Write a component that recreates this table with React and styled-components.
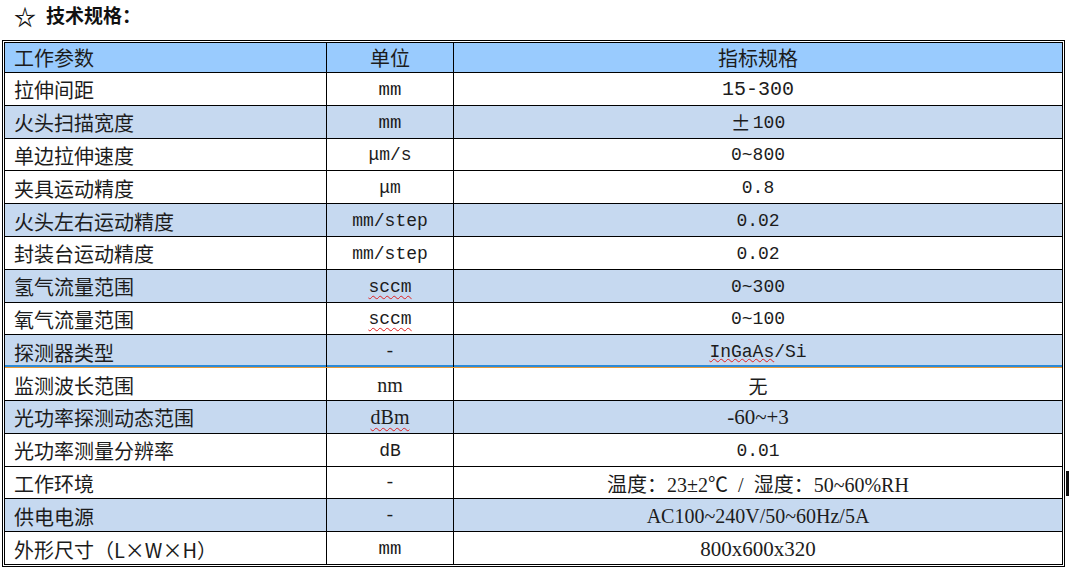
import React from 'react'
import styled, { createGlobalStyle, css } from 'styled-components'

const GlobalStyle = createGlobalStyle`
  html, body {
    margin: 0;
    padding: 0;
    background: #fff;
  }
  body {
    font-family: "Noto Sans CJK SC", sans-serif;
    color: #1c1c1c;
  }
`

const fonts = {
  cjk: '"Noto Sans CJK SC", sans-serif',
  serif: '"Liberation Serif", "Noto Sans CJK SC", serif',
  mono: '"Liberation Mono", "Noto Sans CJK SC", monospace',
}

const Page = styled.div`
  position: relative;
  width: 1071px;
  height: 568px;
  padding-left: 2px;
  box-sizing: border-box;
  overflow: hidden;
`

const Title = styled.h3`
  margin: 0 0 11px 0;
  height: 29px;
  padding-left: 12px;
  display: flex;
  align-items: center;
  gap: 10px;
  font-family: ${fonts.cjk};
  font-size: 19px;
  font-weight: 700;
  color: #111;
`

const Star = styled.span`
  font-family: "Noto Sans CJK SC", sans-serif;
  font-size: 22px;
  font-weight: 700;
`

const Table = styled.div`
  width: 1063px;
  height: 527px;
  box-sizing: border-box;
  border: 3px double #000;
  display: flex;
  flex-direction: column;
`

const Row = styled.div`
  display: grid;
  grid-template-columns: 322px 127px 1fr;
  flex: ${p => (p.$head ? '0 0 30px' : '1 1 0')};
  min-height: 0;
  box-sizing: border-box;
  background: ${p => p.$bg};
  border-bottom: 1px solid #000;
  &:last-child {
    border-bottom: none;
  }
  ${p =>
    p.$accent &&
    css`
      border-bottom: 1px solid #ec9a35;
      box-shadow: inset 0 -2px 0 #2d8ad6;
    `}
`

const Cell = styled.div`
  display: flex;
  align-items: center;
  justify-content: ${p => (p.$left ? 'flex-start' : 'center')};
  padding-left: ${p => (p.$left ? '9px' : '0')};
  padding-top: ${p => (p.$head ? '0' : '2px')};
  box-sizing: border-box;
  border-right: ${p => (p.$last ? 'none' : '1px solid #000')};
  font-family: ${p => fonts[p.$font || 'cjk']};
  font-size: ${p => p.$size || 20}px;
  white-space: pre;
  overflow: hidden;
`

const Wavy = styled.span`
  text-decoration: underline wavy #e02020;
  text-decoration-thickness: 1px;
  text-underline-offset: ${p => (p.$tight ? '1px' : '3px')};
`

const Wide = styled.span`
  font-family: ${fonts.cjk};
  font-size: 20px;
  margin-right: 2px;
`

const SideMark = styled.div`
  position: absolute;
  left: 1066px;
  top: 471px;
  width: 3px;
  height: 25px;
  background: #111;
`

const HEAD = '#99cbfe'
const BLUE = '#c6d9f0'
const WHITE = '#ffffff'

const rows = [
  { name: '拉伸间距', unit: ['mm', 'mono', 19], spec: ['15-300', 'mono', 20], bg: WHITE },
  { name: '火头扫描宽度', unit: ['mm', 'mono', 19], spec: ['100', 'mono', 18, null, '±'], bg: BLUE },
  { name: '单边拉伸速度', unit: ['μm/s', 'mono', 18], spec: ['0~800', 'mono', 18], bg: WHITE },
  { name: '夹具运动精度', unit: ['μm', 'mono', 18], spec: ['0.8', 'mono', 18], bg: WHITE },
  { name: '火头左右运动精度', unit: ['mm/step', 'mono', 18], spec: ['0.02', 'mono', 18], bg: BLUE },
  { name: '封装台运动精度', unit: ['mm/step', 'mono', 18], spec: ['0.02', 'mono', 18], bg: WHITE },
  { name: '氢气流量范围', unit: ['sccm', 'mono', 18, true], spec: ['0~300', 'mono', 18], bg: BLUE },
  { name: '氧气流量范围', unit: ['sccm', 'mono', 18, true], spec: ['0~100', 'mono', 18], bg: WHITE },
  { name: '探测器类型', unit: ['-', 'mono', 18], spec: ['InGaAs/Si', 'mono', 18, 'InGaAs'], bg: BLUE, accent: true },
  { name: '监测波长范围', unit: ['nm', 'serif', 20], spec: ['无', 'cjk', 19], bg: WHITE },
  { name: '光功率探测动态范围', unit: ['dBm', 'serif', 20, true], spec: ['-60~+3', 'serif', 21], bg: BLUE },
  { name: '光功率测量分辨率', unit: ['dB', 'mono', 18], spec: ['0.01', 'mono', 18], bg: WHITE },
  { name: '工作环境', unit: ['-', 'mono', 18], spec: ['温度：23±2℃  /  湿度：50~60%RH', 'serif', 20], bg: WHITE },
  { name: '供电电源', unit: ['-', 'mono', 18], spec: ['AC100~240V/50~60Hz/5A', 'serif', 20], bg: BLUE },
  { name: '外形尺寸（L×W×H）', unit: ['mm', 'mono', 19], spec: ['800x600x320', 'serif', 21], bg: WHITE },
]

function renderText([text, , , wavy, prefix]) {
  let body = text
  if (wavy === true) body = <Wavy>{text}</Wavy>
  else if (typeof wavy === 'string') {
    body = (
      <>
        <Wavy $tight>{wavy}</Wavy>
        {text.slice(wavy.length)}
      </>
    )
  }
  return (
    <>
      {prefix && <Wide>{prefix}</Wide>}
      {body}
    </>
  )
}

export default function App() {
  return (
    <Page>
      <GlobalStyle />
      <Title>
        <Star>☆</Star>
        <span>技术规格：</span>
      </Title>
      <Table>
        <Row $head $bg={HEAD}>
          <Cell $head $left>工作参数</Cell>
          <Cell $head>单位</Cell>
          <Cell $head $last>指标规格</Cell>
        </Row>
        {rows.map(r => (
          <Row key={r.name} $bg={r.bg} $accent={r.accent}>
            <Cell $left>{r.name}</Cell>
            <Cell $font={r.unit[1]} $size={r.unit[2]}>
              {renderText(r.unit)}
            </Cell>
            <Cell $last $font={r.spec[1]} $size={r.spec[2]}>
              {renderText(r.spec)}
            </Cell>
          </Row>
        ))}
      </Table>
      <SideMark />
    </Page>
  )
}
